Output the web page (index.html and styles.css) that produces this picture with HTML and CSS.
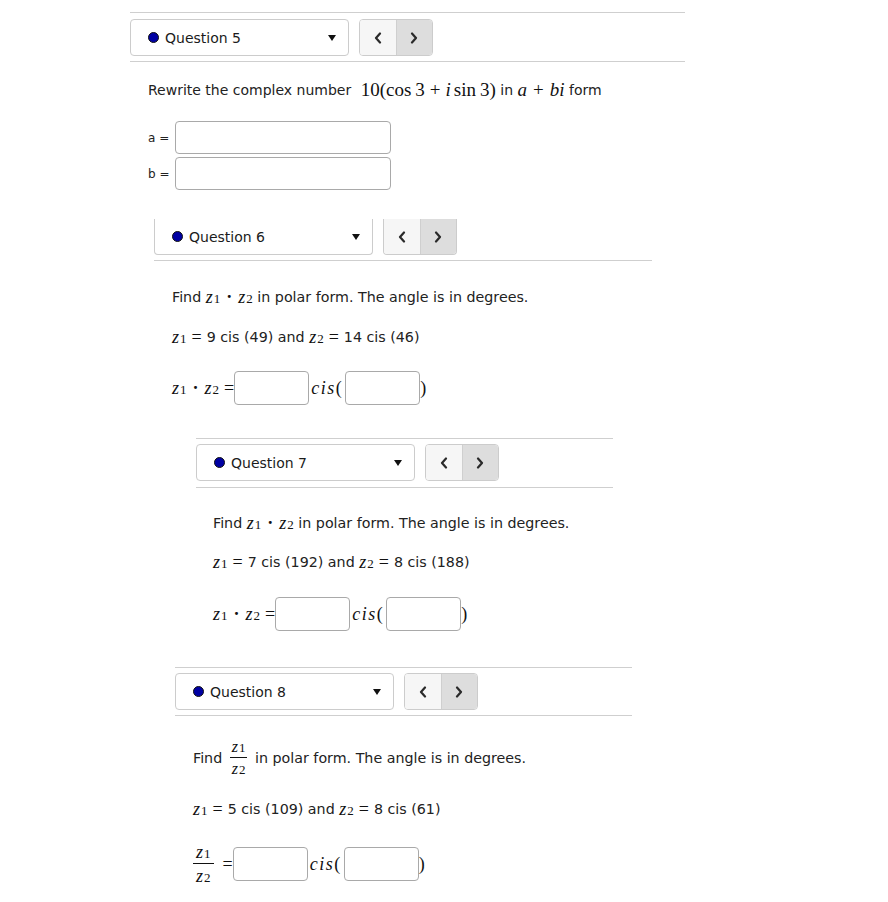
FILE: index.html
```html
<!DOCTYPE html>
<html lang="en">
<head>
<meta charset="utf-8">
<title>Questions</title>
<link rel="stylesheet" href="styles.css">
</head>
<body>

<section class="q q5">
  <div class="q-head">
    <div class="picker"><span class="dot"></span><span class="qname">Question 5</span><span class="caret"></span></div>
    <div class="nav"><span class="nav-btn prev"><svg width="8" height="12" viewBox="0 0 8 12"><polyline points="6,1.5 2,6 6,10.5" /></svg></span><span class="nav-btn next"><svg width="8" height="12" viewBox="0 0 8 12"><polyline points="2,1.5 6,6 2,10.5" /></svg></span></div>
  </div>
  <div class="body b5">
    <p class="prompt">Rewrite the complex number <span class="m big lead"><span class="up">10(cos</span><span class="up sp">3</span><span class="op">+</span><span class="it">i</span><span class="up sp2">sin</span><span class="up sp">3)</span></span> in <span class="m big"><span class="it">a</span><span class="op wide-op">+</span><span class="it">bi</span></span> form</p>
    <div class="ab">
      <label class="ab-row"><span class="ab-lbl">a =</span><span class="box wide"></span></label>
      <label class="ab-row"><span class="ab-lbl">b =</span><span class="box wide"></span></label>
    </div>
  </div>
</section>

<section class="q q6">
  <div class="q-head cut">
    <div class="picker"><span class="dot"></span><span class="qname">Question 6</span><span class="caret"></span></div>
    <div class="nav"><span class="nav-btn prev"><svg width="8" height="12" viewBox="0 0 8 12"><polyline points="6,1.5 2,6 6,10.5" /></svg></span><span class="nav-btn next"><svg width="8" height="12" viewBox="0 0 8 12"><polyline points="2,1.5 6,6 2,10.5" /></svg></span></div>
  </div>
  <div class="body b6">
    <p class="prompt">Find <span class="m"><span class="it">z</span><sub>1</sub><span class="dotop">·</span><span class="it">z</span><sub>2</sub></span> in polar form. The angle is in degrees.</p>
    <p class="given"><span class="m"><span class="it">z</span><sub>1</sub><span class="eq">=</span></span>9 cis (49) and <span class="m"><span class="it">z</span><sub>2</sub><span class="eq">=</span></span>14 cis (46)</p>
    <div class="ans"><span class="m"><span class="it">z</span><sub>1</sub><span class="dotop">·</span><span class="it">z</span><sub>2</sub><span class="eq tight">=</span></span><span class="box"></span><span class="m cis"><span class="it">cis</span><span class="up">(</span></span><span class="box"></span><span class="m"><span class="up">)</span></span></div>
  </div>
</section>

<section class="q q7">
  <div class="q-head">
    <div class="picker"><span class="dot"></span><span class="qname">Question 7</span><span class="caret"></span></div>
    <div class="nav"><span class="nav-btn prev"><svg width="8" height="12" viewBox="0 0 8 12"><polyline points="6,1.5 2,6 6,10.5" /></svg></span><span class="nav-btn next"><svg width="8" height="12" viewBox="0 0 8 12"><polyline points="2,1.5 6,6 2,10.5" /></svg></span></div>
  </div>
  <div class="body b7">
    <p class="prompt">Find <span class="m"><span class="it">z</span><sub>1</sub><span class="dotop">·</span><span class="it">z</span><sub>2</sub></span> in polar form. The angle is in degrees.</p>
    <p class="given"><span class="m"><span class="it">z</span><sub>1</sub><span class="eq">=</span></span>7 cis (192) and <span class="m"><span class="it">z</span><sub>2</sub><span class="eq">=</span></span>8 cis (188)</p>
    <div class="ans"><span class="m"><span class="it">z</span><sub>1</sub><span class="dotop">·</span><span class="it">z</span><sub>2</sub><span class="eq tight">=</span></span><span class="box"></span><span class="m cis"><span class="it">cis</span><span class="up">(</span></span><span class="box"></span><span class="m"><span class="up">)</span></span></div>
  </div>
</section>

<section class="q q8">
  <div class="q-head">
    <div class="picker"><span class="dot"></span><span class="qname">Question 8</span><span class="caret"></span></div>
    <div class="nav"><span class="nav-btn prev"><svg width="8" height="12" viewBox="0 0 8 12"><polyline points="6,1.5 2,6 6,10.5" /></svg></span><span class="nav-btn next"><svg width="8" height="12" viewBox="0 0 8 12"><polyline points="2,1.5 6,6 2,10.5" /></svg></span></div>
  </div>
  <div class="body b8">
    <p class="prompt frac-row">Find <span class="m frac small"><span class="num"><span class="it">z</span><sub>1</sub></span><span class="den"><span class="it">z</span><sub>2</sub></span></span> in polar form. The angle is in degrees.</p>
    <p class="given"><span class="m"><span class="it">z</span><sub>1</sub><span class="eq">=</span></span>5 cis (109) and <span class="m"><span class="it">z</span><sub>2</sub><span class="eq">=</span></span>8 cis (61)</p>
    <div class="ans tall"><span class="m frac"><span class="num"><span class="it">z</span><sub>1</sub></span><span class="den"><span class="it">z</span><sub>2</sub></span></span><span class="m"><span class="eq after-frac">=</span></span><span class="box"></span><span class="m cis"><span class="it">cis</span><span class="up">(</span></span><span class="box"></span><span class="m"><span class="up">)</span></span></div>
  </div>
</section>

</body>
</html>
```

FILE: styles.css
```css
* { box-sizing: border-box; }

html, body {
  margin: 0;
  padding: 0;
  background: #ffffff;
}

body {
  font-family: "DejaVu Sans", Verdana, sans-serif;
  font-size: 14px;
  color: #222222;
  padding-top: 12px;
}

p { margin: 0; }

.q5 { margin-left: 130px; width: 555px; }
.q6 { margin-left: 154px; width: 498px; margin-top: 29px; }
.q7 { margin-left: 196px; width: 417px; margin-top: 33px; }
.q8 { margin-left: 175px; width: 457px; margin-top: 36px; }

/* header bar */
.q-head {
  display: flex;
  align-items: flex-start;
  gap: 10px;
  border-top: 1px solid #cfcfcf;
  border-bottom: 1px solid #cfcfcf;
  padding: 6px 0 5px;
}
.q7 .q-head { padding: 5px 0 6px; }
.q8 .q-head { padding: 5px 0 5px; }
.q-head.cut {
  border-top: none;
  padding-top: 0;
}
.q-head.cut .picker,
.q-head.cut .nav { border-top-width: 0; border-top-left-radius: 0; border-top-right-radius: 0; height: 36px; }

.picker {
  width: 219px;
  height: 37px;
  border: 1px solid #cccccc;
  border-radius: 4px;
  background: #fff;
  display: flex;
  align-items: center;
  padding-left: 17px;
  padding-right: 12px;
}
.dot {
  width: 11px;
  height: 11px;
  border-radius: 50%;
  background: #0000a3;
  border: 1px solid #111;
  flex: none;
}
.qname {
  margin-left: 6px;
  font-size: 14px;
  color: #1b1b1b;
  flex: 1;
}
.caret {
  width: 0;
  height: 0;
  border-left: 4px solid transparent;
  border-right: 4px solid transparent;
  border-top: 6px solid #111;
}

.nav {
  display: flex;
  width: 74px;
  height: 37px;
  border: 1px solid #cccccc;
  border-radius: 4px;
  overflow: hidden;
}
.nav-btn {
  flex: 1;
  display: flex;
  align-items: center;
  justify-content: center;
}
.nav-btn.prev { background: #f6f6f6; border-right: 1px solid #cfcfcf; }
.nav-btn.next { background: #dddddd; }
.nav-btn polyline {
  fill: none;
  stroke: #2a2a2a;
  stroke-width: 2.2;
  stroke-linecap: round;
  stroke-linejoin: round;
}

/* bodies */
.body { padding-left: 18px; }
.b7 { padding-left: 17px; }
.b6, .b7, .b8 { font-size: 14.25px; }

.prompt, .given {
  height: 20px;
  line-height: 20px;
  display: flex;
  align-items: center;
  white-space: pre;
}
.b5 .prompt { margin-top: 18px; }
.b6 .prompt { margin-top: 26px; }
.b7 .prompt { margin-top: 25px; }
.given { margin-top: 19px; }
.b6 .given { margin-top: 20px; }
.b6 .ans { margin-top: 24px; }
.b7 .ans { margin-top: 25px; }
.b8 .prompt { margin-top: 22px; height: 40px; }
.b8 .given { margin-top: 21px; }

/* math */
.m {
  font-family: "Liberation Serif", "DejaVu Serif", serif;
  font-size: 18px;
  display: inline-flex;
  align-items: baseline;
  color: #111;
}
.m.big { font-size: 19px; }
.m.lead { margin-left: 5px; }
.it { font-style: italic; }
.up { font-style: normal; }
.sp { margin-left: 4px; }
.sp2 { margin-left: 3px; }
.op { margin: 0 5px; }
.op.wide-op { margin: 0 6px; }
.m sub {
  font-size: 13px;
  font-style: normal;
  vertical-align: -3px;
  line-height: 1;
  margin-left: 1px;
}
.dotop { margin: 0 6px; font-weight: bold; }
.eq { margin: 0 5px; }
.eq.tight { margin: 0 0 0 5px; }
.eq.after-frac { margin: 0 0 0 9px; }

/* a/b inputs */
.ab { margin-top: 21px; display: flex; flex-direction: column; gap: 3px; }
.ab-row { display: flex; align-items: center; }
.ab-lbl { width: 27px; font-size: 12px; color: #222; }
.box {
  display: inline-block;
  width: 75px;
  height: 34px;
  border: 1px solid #a9a9a9;
  border-radius: 4px;
  background: #fff;
}
.box.wide { width: 216px; height: 33px; }

.ans {
  margin-top: 26px;
  height: 34px;
  display: flex;
  align-items: center;
}
.ans .cis { margin: 0 2px 0 2px; letter-spacing: 1.5px; }
.ans.tall { margin-top: 22px; height: 46px; }

/* fractions */
.frac {
  display: inline-flex;
  flex-direction: column;
  align-items: center;
  font-size: 18px;
  line-height: 1;
  vertical-align: middle;
}
.frac .num, .frac .den {
  display: flex;
  align-items: baseline;
  padding: 0 3px;
}
.frac .num { border-bottom: 1px solid #111; padding-bottom: 2px; }
.frac .den { padding-top: 3px; }
.frac.small { font-size: 16px; margin: 0 3px; }
.frac.small .num, .frac.small .den { padding-left: 2px; padding-right: 2px; }
```
